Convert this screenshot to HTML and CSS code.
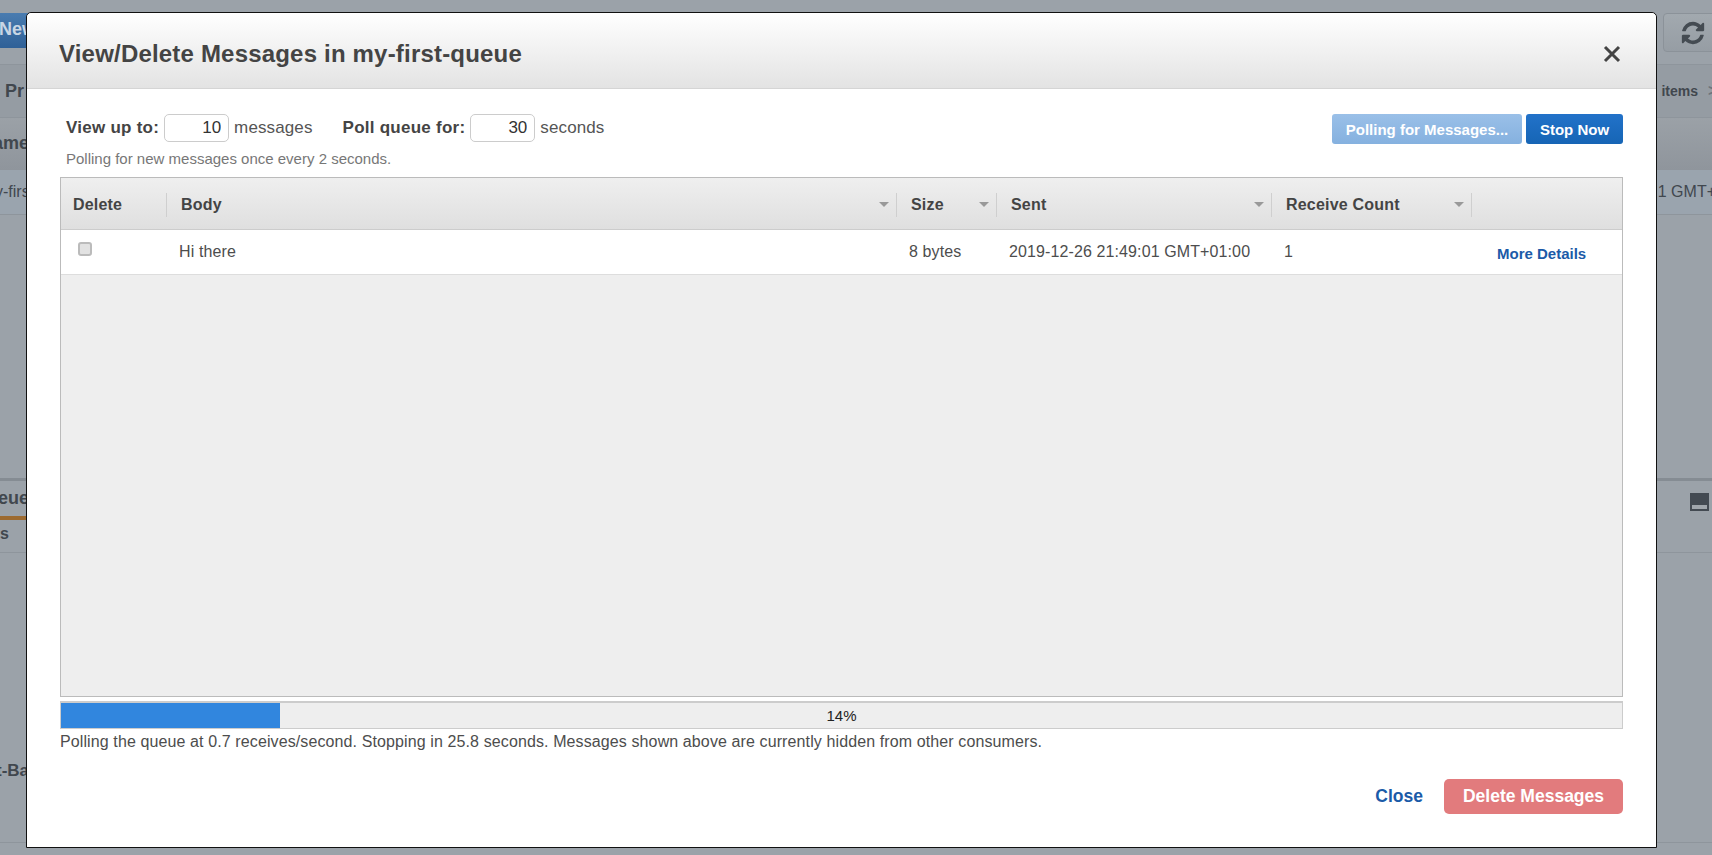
FILE: index.html
```html
<!DOCTYPE html>
<html lang="en">
<head>
  <meta charset="UTF-8">
  <title>View/Delete Messages</title>
  <link rel="stylesheet" href="styles.css">
</head>
<body>

  <!-- page behind the dialog, already dimmed -->
  <div class="page">
    <div class="toolbar">
      <span class="new-btn">New</span>
      <span class="refresh-btn">
        <svg width="26" height="26" viewBox="0 0 1792 1792"><path d="M1639 1056q0 5-1 7-64 268-268 434.5t-478 166.5q-146 0-282.5-55t-243.5-157l-129 129q-19 19-45 19t-45-19-19-45v-448q0-26 19-45t45-19h448q26 0 45 19t19 45-19 45l-137 137q71 66 161 102t187 36q134 0 250-65t186-179q11-17 53-117 8-23 30-23h192q13 0 22.5 9.5t9.5 22.5zm25-800v448q0 26-19 45t-45 19h-448q-26 0-45-19t-19-45 19-45l138-138q-148-137-349-137-134 0-250 65t-186 179q-11 17-53 117-8 23-30 23h-199q-13 0-22.5-9.5t-9.5-22.5v-7q65-268 270-434.5t480-166.5q146 0 284 55.5t245 156.5l130-129q19-19 45-19t45 19 19 45z"/></svg>
      </span>
    </div>
    <div class="filter-row">
      <b class="filter-label">Pr</b>
      <b class="filter-items">items</b>
      <b class="filter-next">&gt;</b>
    </div>
    <div class="queue-head"><b>ame</b></div>
    <div class="queue-row">
      <span>y-firs</span>
      <span>1 GMT+</span>
    </div>
    <div class="queue-space"></div>
    <div class="split-bar"></div>
    <div class="tabs">
      <b class="tab-active">eue</b>
      <span class="collapse-icon"></span>
    </div>
    <div class="subtabs"><b>s</b></div>
    <div class="detail"><b>t-Ba</b></div>
  </div>

  <div class="modal">
    <div class="modal-head">
      <h1>View/Delete Messages in my-first-queue</h1>
      <svg class="close-x" width="18" height="18" viewBox="0 0 18 18"><path d="M2 2l14 14M16 2L2 16"/></svg>
    </div>

    <div class="modal-body">
      <div class="controls">
        <div>
          <div class="poll-form">
            <label>View up to:</label>
            <input class="num" type="text" value="10">
            <span class="unit">messages</span>
            <label class="second">Poll queue for:</label>
            <input class="num" type="text" value="30">
            <span class="unit">seconds</span>
          </div>
          <p class="hint">Polling for new messages once every 2 seconds.</p>
        </div>
        <div class="actions">
          <button class="btn btn-polling" type="button">Polling for Messages...</button>
          <button class="btn btn-stop" type="button">Stop Now</button>
        </div>
      </div>

      <div class="grid">
        <div class="grid-head">
          <div class="col col-delete"><span>Delete</span></div>
          <div class="col col-body"><span>Body</span><i class="sort"></i></div>
          <div class="col col-size"><span>Size</span><i class="sort"></i></div>
          <div class="col col-sent"><span>Sent</span><i class="sort"></i></div>
          <div class="col col-count"><span>Receive Count</span><i class="sort"></i></div>
          <div class="col col-more"></div>
        </div>
        <div class="grid-row">
          <div class="cell col-delete"><span class="check"></span></div>
          <div class="cell col-body">Hi there</div>
          <div class="cell col-size">8 bytes</div>
          <div class="cell col-sent">2019-12-26 21:49:01 GMT+01:00</div>
          <div class="cell col-count">1</div>
          <div class="cell col-more"><a href="#">More Details</a></div>
        </div>
      </div>

      <div class="progress">
        <div class="progress-fill" style="width: 14%"></div>
        <span class="progress-text">14%</span>
      </div>
      <p class="status">Polling the queue at 0.7 receives/second. Stopping in 25.8 seconds. Messages shown above are currently hidden from other consumers.</p>

      <div class="modal-foot">
        <a class="close-link" href="#">Close</a>
        <button class="btn-delete" type="button">Delete Messages</button>
      </div>
    </div>
  </div>

</body>
</html>
```

FILE: styles.css
```css
* {
  box-sizing: border-box;
}

html, body {
  margin: 0;
  height: 855px;
  overflow: hidden;
}

body {
  background-color: #9ba2a9;
  font-family: "Liberation Sans", Arial, sans-serif;
  color: #444;
}

/* dimmed page */
.page {
  color: #41474e;
  font-size: 16px;
}

.toolbar {
  height: 65px;
  display: flex;
  justify-content: space-between;
  align-items: flex-start;
  padding-top: 13px;
  border-bottom: 1px solid #8e959c;
}

.new-btn {
  width: 40px;
  height: 35px;
  background: linear-gradient(#4a7cb0, #2f6097);
  color: #c9d6e4;
  font-size: 18px;
  font-weight: bold;
  line-height: 33px;
  text-indent: -1px;
}

.refresh-btn {
  width: 60px;
  height: 39px;
  margin-right: -11px;
  padding: 6px 0 0 16px;
  border: 1px solid #8b9299;
  border-radius: 4px;
  background: linear-gradient(#a2a9af, #969da4);
}

.refresh-btn svg {
  fill: #444b52;
  display: block;
}

.filter-row {
  height: 53px;
  display: flex;
  align-items: center;
  padding-left: 5px;
  border-bottom: 1px solid #8e959c;
  background: #959ca3;
}

.filter-label {
  font-size: 18px;
  flex: 1;
}

.filter-items {
  font-size: 14px;
  margin-right: 10px;
}

.filter-next {
  width: 4px;
  overflow: hidden;
  color: #6d747b;
}

.queue-head {
  height: 52px;
  padding-top: 15px;
  margin-left: -7px;
  background: linear-gradient(#9ba1a7, #8f959c);
  font-size: 18px;
}

.queue-row {
  height: 45px;
  display: flex;
  justify-content: space-between;
  align-items: center;
  margin-left: -5px;
  margin-right: -4px;
  border-bottom: 1px solid #8e959c;
  background: #9aa4ae;
  font-size: 16px;
}

.queue-space {
  height: 263px;
}

.split-bar {
  height: 3px;
  background: #858c93;
}

.tabs {
  height: 39px;
  display: flex;
  justify-content: space-between;
  font-size: 18px;
}

.tab-active {
  height: 39px;
  width: 27px;
  padding-top: 7px;
  border-bottom: 4px solid #9c6a30;
  text-indent: -2px;
}

.collapse-icon {
  width: 19px;
  height: 18px;
  margin: 12px 3px 0 0;
  border: solid #434a52;
  border-width: 12px 2px 2px;
  background: #a0a6ac;
}

.subtabs {
  height: 33px;
  padding-top: 5px;
  border-bottom: 1px solid #8e959c;
  font-size: 16px;
}

.detail {
  height: 290px;
  padding-top: 208px;
  margin-left: -4px;
  border-bottom: 1px solid #8e959c;
  font-size: 17px;
}

/* dialog */
.modal {
  position: absolute;
  left: 26px;
  top: 12px;
  width: 1631px;
  height: 836px;
  background: #fff;
  border: 1px solid #111;
  border-radius: 5px 5px 0 0;
}

.modal-head {
  height: 76px;
  padding: 6px 32px 0;
  display: flex;
  justify-content: space-between;
  align-items: center;
  background: linear-gradient(#fff, #e3e3e3);
  border-bottom: 1px solid #d5d5d5;
  border-radius: 5px 5px 0 0;
}

.modal-head h1 {
  margin: 0;
  font-size: 24px;
  letter-spacing: 0.19px;
  font-weight: bold;
  color: #444;
}

.close-x {
  margin: 1px 3px 0 0;
  fill: none;
  stroke: #444;
  stroke-width: 3;
}

.modal-body {
  padding: 0 33px;
}

.controls {
  display: flex;
  justify-content: space-between;
  padding-top: 25px;
  height: 88px;
}

.poll-form {
  display: flex;
  align-items: center;
  padding-left: 6px;
  height: 28px;
  font-size: 17px;
  letter-spacing: 0.12px;
}

.poll-form label {
  font-weight: bold;
  letter-spacing: 0.25px;
  color: #444;
}

.poll-form .second {
  margin-left: 30px;
}

.num {
  width: 65px;
  height: 28px;
  margin: 0 5px;
  padding: 0 7px 0 0;
  border: 1px solid #ccc;
  border-radius: 5px;
  text-align: right;
  font: 17px "Liberation Sans", Arial, sans-serif;
  color: #333;
}

.unit {
  color: #555;
}

.hint {
  margin: 8px 0 0 6px;
  font-size: 15px;
  color: #777;
}

.actions {
  display: flex;
  gap: 4px;
}

.btn {
  height: 30px;
  padding: 0;
  border: 0;
  border-radius: 3px;
  font: bold 15px "Liberation Sans", Arial, sans-serif;
  color: #fff;
}

.btn-polling {
  width: 190px;
  background: linear-gradient(#9ac0e8, #85b1df);
}

.btn-stop {
  width: 97px;
  background: linear-gradient(#2272c9, #1665b5);
}

.grid {
  height: 520px;
  border: 1px solid #bbb;
  background: #eee;
}

.grid-head {
  height: 52px;
  padding-top: 2px;
  display: flex;
  align-items: center;
  background: linear-gradient(#efefef, #dfdfdf);
  border-bottom: 1px solid #ccc;
}

.grid-row {
  height: 45px;
  display: flex;
  align-items: center;
  background: #fff;
  border-bottom: 1px solid #ddd;
  font-size: 16px;
  letter-spacing: 0.11px;
  color: #4d4d4d;
}

.col {
  height: 24px;
  display: flex;
  justify-content: space-between;
  align-items: center;
  padding: 0 7px 0 14px;
  border-right: 1px solid #cfcfcf;
  font-size: 16px;
  letter-spacing: 0.2px;
  font-weight: bold;
}

.col-delete { width: 106px; }
.col-body { width: 730px; }
.col-size { width: 100px; }
.col-sent { width: 275px; }
.col-count { width: 200px; }
.col-more { flex: 1; }

.col.col-delete {
  padding-left: 12px;
}

.col.col-more {
  border-right: 0;
}

.sort {
  width: 0;
  height: 0;
  border: 5px solid transparent;
  border-top: 5px solid #999;
  border-bottom: 0;
}

.cell {
  padding-left: 12px;
}

.cell.col-delete {
  padding-left: 17px;
  padding-bottom: 7px;
}

.cell.col-more {
  padding-left: 25px;
  padding-top: 4px;
}

.cell.col-more a {
  font-size: 15px;
  letter-spacing: 0;
  font-weight: bold;
  color: #1b5ba8;
  text-decoration: none;
}

.check {
  display: block;
  width: 14px;
  height: 14px;
  border: 2px solid #bbb;
  border-radius: 3px;
  background: #e2e2e2;
}

.progress {
  position: relative;
  height: 28px;
  margin-top: 4px;
  border: 1px solid #ccc;
  border-top-width: 2px;
  background: #eee;
  display: flex;
  justify-content: center;
  align-items: center;
  font-size: 15px;
  color: #222;
}

.progress-fill {
  position: absolute;
  left: 0;
  top: 0;
  bottom: 0;
  background: #3186de;
}

.progress-text {
  position: relative;
}

.status {
  margin: 4px 0 0;
  font-size: 16px;
  letter-spacing: 0.11px;
  color: #4d4d4d;
}

.modal-foot {
  display: flex;
  justify-content: flex-end;
  align-items: center;
  gap: 21px;
  margin-top: 28px;
}

.close-link {
  font-size: 17.5px;
  font-weight: bold;
  color: #1b5ba8;
  text-decoration: none;
}

.btn-delete {
  width: 179px;
  height: 35px;
  border: 0;
  border-radius: 5px;
  background: #e27b7d;
  color: #fff;
  font: bold 17.5px "Liberation Sans", Arial, sans-serif;
}
```
